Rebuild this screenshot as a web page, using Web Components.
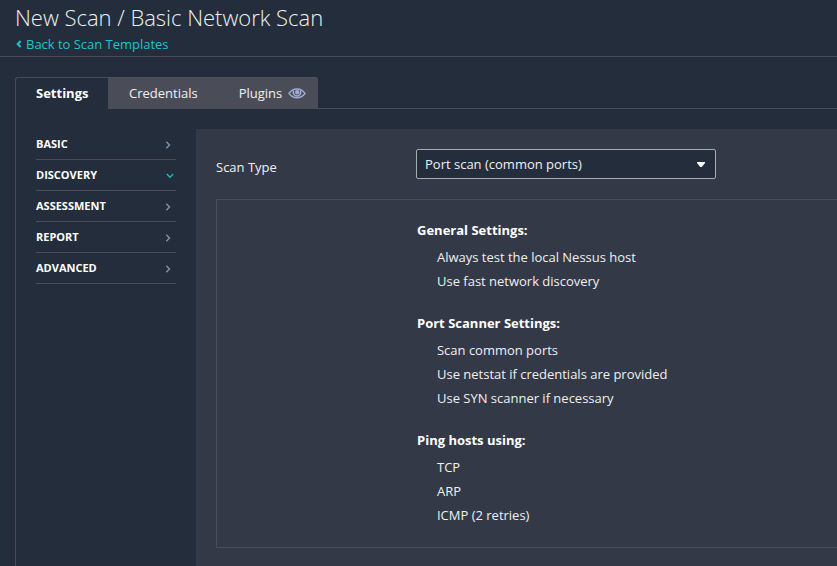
<!DOCTYPE html>
<html lang="en">
<head>
<meta charset="utf-8">
<title>New Scan</title>
<style>
html,body{margin:0;height:100%;overflow:hidden;background:#242d3b}
body{font:13px/18px "Open Sans","Noto Sans",sans-serif;color:#f0f0f2}
</style>
</head>
<body>
<scan-page></scan-page>
<script>
function define(name, html) {
  const t = document.createElement('template');
  t.innerHTML = html;
  customElements.define(name, class extends HTMLElement {
    constructor() {
      super();
      this.attachShadow({mode: 'open'}).append(t.content.cloneNode(true));
    }
  });
}

define('page-header', `<style>
:host{display:block;box-sizing:border-box;height:57px;padding:2px 0 0 15px;border-bottom:1px solid #484d57}
h1{margin:0;font-size:22px;line-height:30px;font-weight:300;white-space:nowrap;letter-spacing:-.015px}
a{display:flex;align-items:center;gap:4px;margin-top:3px;line-height:18px;color:#1fc3d0;letter-spacing:-.02px}
svg{display:block;margin-left:1px}
</style><h1><slot name="title"></slot></h1>
<a><svg width="6" height="8" viewBox="0 0 6 8"><path d="M4.6 1L1.7 4l2.9 3" fill="none" stroke="currentColor" stroke-width="2"/></svg><slot></slot></a>`);

define('tab-item', `<style>
:host{display:flex;box-sizing:border-box;height:32px;align-items:center;gap:6px;padding:0 21px 2px;background:#4a4d57;border-top:1px solid #50535c;white-space:nowrap}
:host([active]){width:93px;background:#242d3b;border:1px solid #484d57;border-width:1px 0 0 1px;border-radius:3px 0 0 0;padding:0 19px 2px 20px;font-weight:700;color:#fff}
:host([last]){width:99px;border-radius:0 3px 0 0;padding:0 11px 2px 20px}
</style><slot></slot>`);

define('eye-icon', `<style>:host,svg{display:block}</style>
<svg width="18" height="12" viewBox="0 0 18 12"><path d="M1 6.3C3.2 3.1 5.8 1.9 9 1.9S14.8 3.1 17 6.3C14.8 9.5 12.2 10.7 9 10.7S3.2 9.5 1 6.3Z" fill="none" stroke="#9fabd4" stroke-width="1.5"/><path d="M5.6 3.4C4.6 6.6 6.3 8.9 9 8.9s4.4-2.3 3.4-5.5" fill="none" stroke="#9fabd4" stroke-width="1.5"/><circle cx="9.2" cy="5.2" r="2.2" fill="#9fabd4"/></svg>`);

define('tab-bar', `<style>
:host{display:flex;margin:20px 0 0 15px}
span{flex:1;border-bottom:1px solid #484d57}
</style><slot></slot><span></span>`);

define('nav-item', `<style>
:host{display:flex;box-sizing:border-box;height:31px;justify-content:space-between;align-items:center;padding-right:4px;border-bottom:1px solid #484d57;font-size:11px;font-weight:700;color:#fff}
svg{display:block;margin-top:2px;color:#8390b0}
.down{display:none;color:#1cb8c2;margin:2px -2px 0 0}
:host([open]) .down{display:block}
:host([open]) .right{display:none}
path{fill:none;stroke:currentColor;stroke-width:1.4}
</style><slot></slot>
<svg class="right" width="8" height="8" viewBox="0 0 8 8"><path d="M2.3 .8L5.5 4 2.3 7.2"/></svg>
<svg class="down" width="8" height="6" viewBox="0 0 8 6"><path d="M.8 1L4 4.2l3.2-3.2"/></svg>`);

define('side-nav', `<style>:host{display:block;width:140px}</style><slot></slot>`);

define('select-box', `<style>
:host{display:flex;box-sizing:border-box;width:300px;height:30px;align-items:center;justify-content:space-between;padding:0 10px 0 8px;border:1px solid #a9abac;border-radius:2px;background:#242d3b}
svg{display:block}
</style><slot></slot><svg width="8" height="5" viewBox="0 0 8 5"><path d="M0 0h8v1L4.7 5H3.3L0 1Z" fill="#fff"/></svg>`);

define('form-row', `<style>
:host{display:grid;grid-template-columns:200px 300px}
span{padding-top:9px}
</style><span><slot name="label"></slot></span><slot></slot>`);

define('setting-line', `<style>:host{display:block;height:24px;line-height:24px;padding-left:20px;letter-spacing:-.008px}</style><slot></slot>`);
define('setting-group', `<style>
:host{display:block;margin-bottom:18px}
b{display:block;color:#fff;line-height:24px;height:27px}
</style><b><slot name="title"></slot></b><slot></slot>`);
define('summary-box', `<style>:host{display:block;box-sizing:border-box;height:349px;margin-top:20px;padding:18px 0 0 200px;border:1px solid #484d57;border-right:0}</style><slot></slot>`);
define('settings-panel', `<style>:host{display:block;flex:1;background:#333946;padding:20px 0 0 20px}</style><slot></slot>`);
define('page-body', `<style>:host{display:flex;box-sizing:border-box;height:457px;margin-left:15px;border-left:1px solid #484d57;padding:20px 0 0 20px;gap:20px}</style><slot></slot>`);

define('scan-page', `<style>:host{display:block;height:566px;overflow:hidden}</style>
<page-header><span slot="title">New Scan / Basic Network Scan</span>Back to Scan Templates</page-header>
<tab-bar><tab-item active>Settings</tab-item><tab-item>Credentials</tab-item><tab-item last>Plugins<eye-icon></eye-icon></tab-item></tab-bar>
<page-body>
<side-nav><nav-item>BASIC</nav-item><nav-item open>DISCOVERY</nav-item><nav-item>ASSESSMENT</nav-item><nav-item>REPORT</nav-item><nav-item>ADVANCED</nav-item></side-nav>
<settings-panel>
<form-row><span slot="label">Scan Type</span><select-box>Port scan (common ports)</select-box></form-row>
<summary-box>
<setting-group><span slot="title">General Settings:</span><setting-line>Always test the local Nessus host</setting-line><setting-line>Use fast network discovery</setting-line></setting-group>
<setting-group><span slot="title">Port Scanner Settings:</span><setting-line>Scan common ports</setting-line><setting-line>Use netstat if credentials are provided</setting-line><setting-line>Use SYN scanner if necessary</setting-line></setting-group>
<setting-group><span slot="title">Ping hosts using:</span><setting-line>TCP</setting-line><setting-line>ARP</setting-line><setting-line>ICMP (2 retries)</setting-line></setting-group>
</summary-box>
</settings-panel>
</page-body>`);
</script>
</body>
</html>
